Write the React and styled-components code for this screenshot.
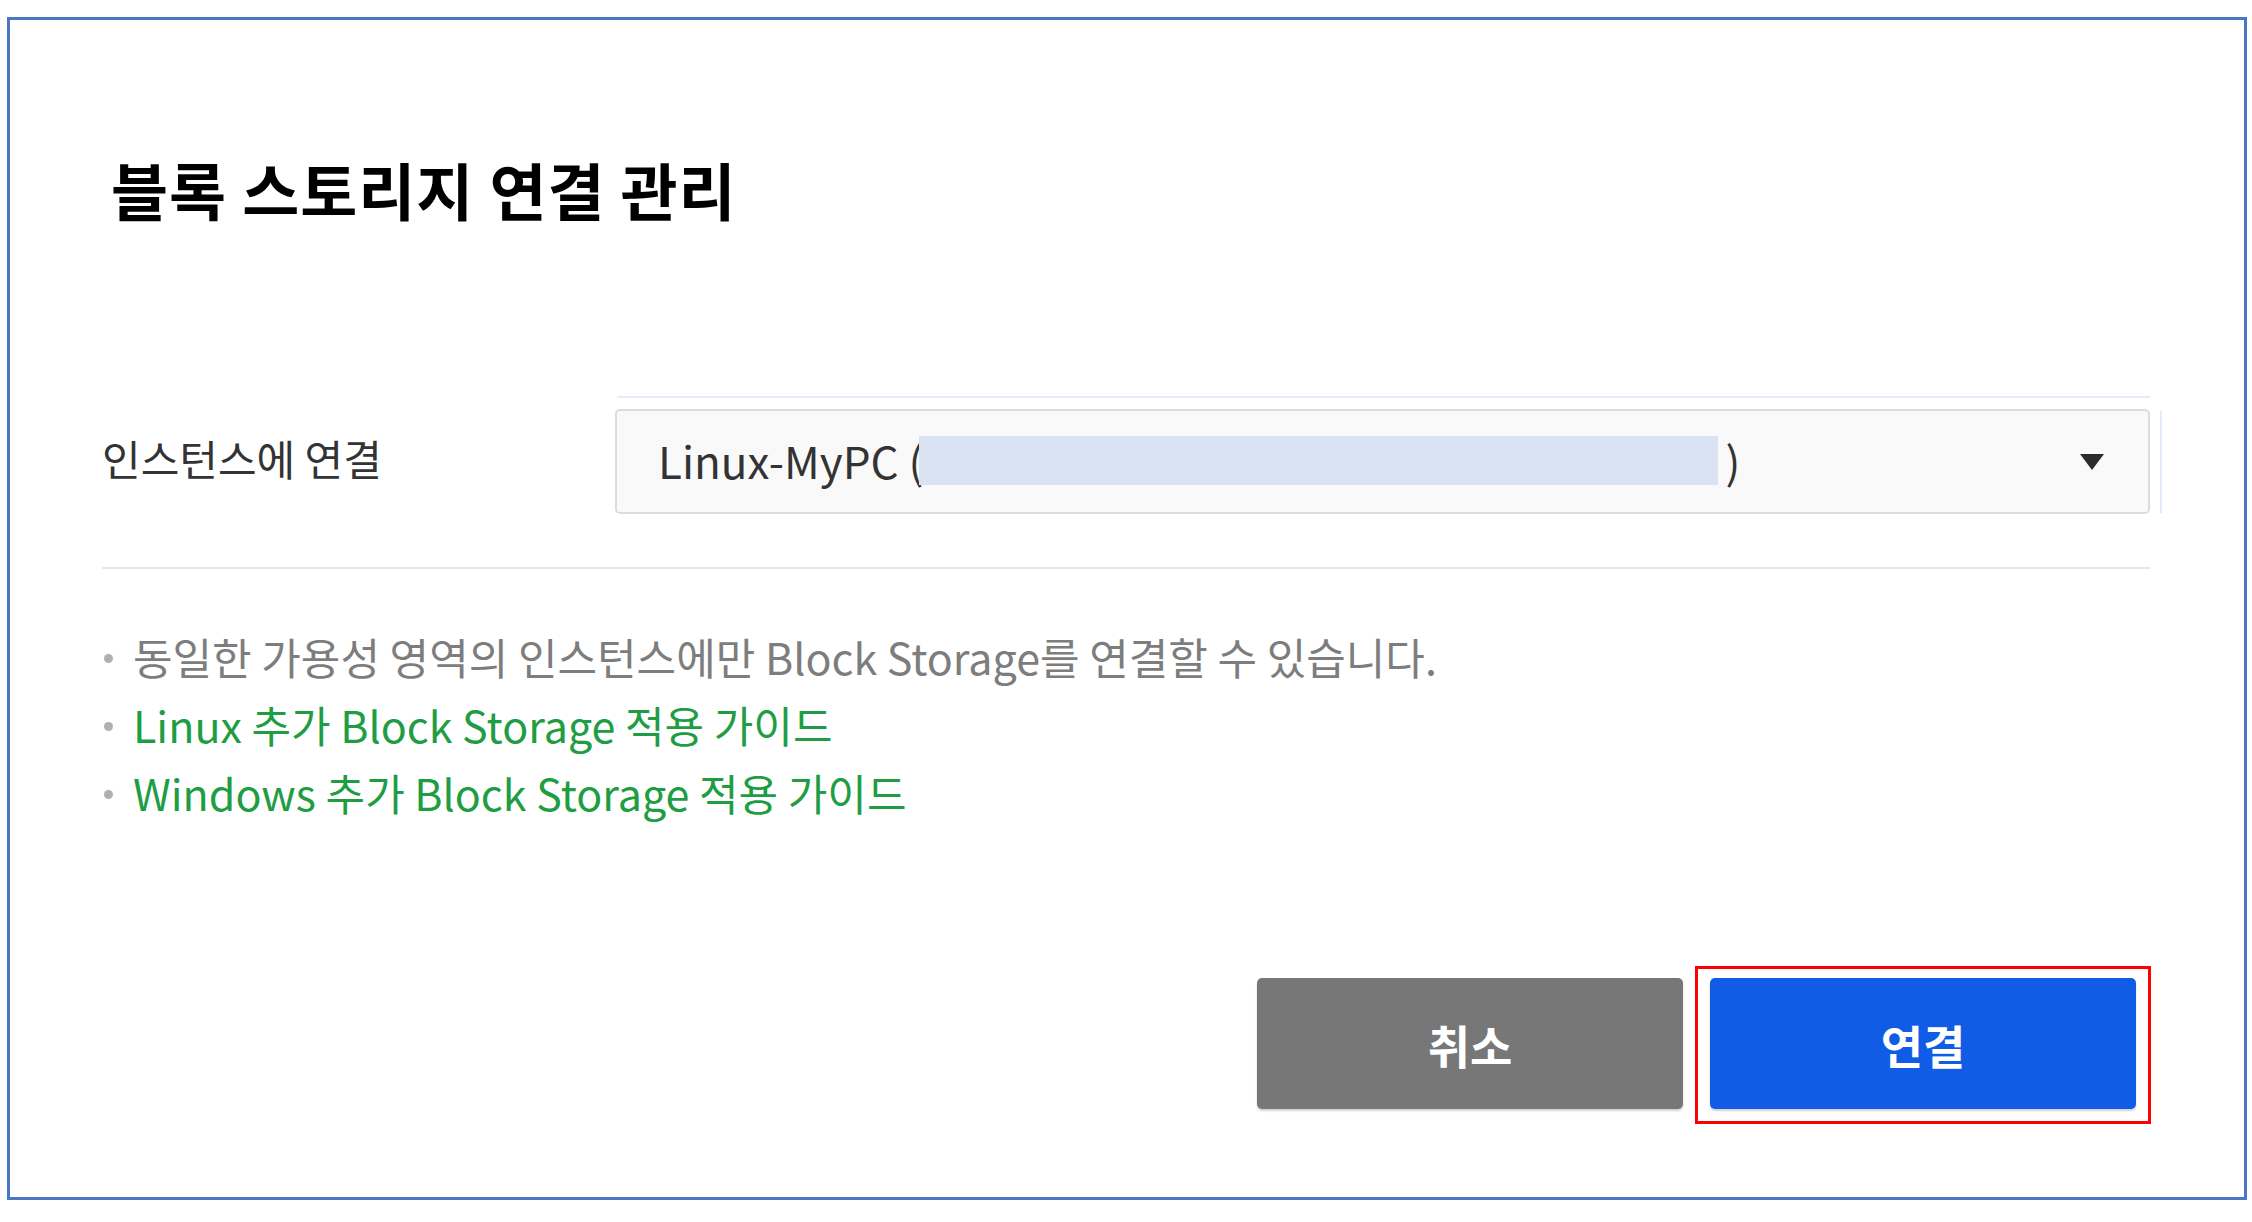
import React from "react";
import styled, { createGlobalStyle } from "styled-components";

const GlobalStyle = createGlobalStyle`
  html, body {
    margin: 0;
    padding: 0;
    background: #ffffff;
  }

  body {
    font-family: "Noto Sans CJK KR", "Noto Sans", sans-serif;
  }
`;

const Frame = styled.div`
  box-sizing: border-box;
  width: 2240px;
  height: 1183px;
  margin: 17px 0 0 7px;
  border: 3px solid #4a76c6;
  background: #ffffff;
  padding: 132px 94px 0 92px;
  display: flex;
  flex-direction: column;
`;

const Title = styled.h2`
  margin: 0 0 183px 9px;
  font-size: 62px;
  line-height: 74px;
  font-weight: 700;
  color: #000000;
  letter-spacing: 1px;
`;

const FieldRow = styled.div`
  display: flex;
  align-items: center;
  height: 105px;
`;

const FieldLabel = styled.div`
  width: 513px;
  flex-shrink: 0;
  padding-bottom: 8px;
  font-size: 42px;
  color: #333333;
`;

const SelectWrap = styled.div`
  position: relative;
  flex: 1;
  height: 100%;

  &::before {
    content: "";
    position: absolute;
    left: 2px;
    right: 0;
    top: -13px;
    height: 2px;
    background: #e4ecf9;
  }

  &::after {
    content: "";
    position: absolute;
    right: -12px;
    top: 2px;
    bottom: 1px;
    width: 2px;
    background: #e4ecf9;
  }
`;

const SelectBox = styled.div`
  box-sizing: border-box;
  height: 100%;
  display: flex;
  align-items: center;
  justify-content: space-between;
  padding: 0 44px 4px 41px;
  background: #f9f9f9;
  border: 2px solid #dcdcdc;
  border-radius: 5px;
  font-size: 44px;
  color: #333333;
`;

const SelectValue = styled.span`
  display: flex;
  align-items: center;
  white-space: nowrap;
`;

const Masked = styled.span`
  display: inline-block;
  width: 799px;
  height: 49px;
  margin: 2px 7px 0 -4px;
  background: #dae3f3;
`;

const Caret = styled.span`
  width: 0;
  height: 0;
  margin-top: 4px;
  border-left: 12px solid transparent;
  border-right: 12px solid transparent;
  border-top: 16px solid #2b2b2b;
`;

const Divider = styled.hr`
  margin: 53px 0 0;
  border: 0;
  height: 2px;
  background: #e6e6e6;
`;

const Notes = styled.ul`
  margin: 53px 0 0;
  padding: 0;
  list-style: none;
`;

const Note = styled.li`
  display: flex;
  align-items: center;
  height: 68px;
  font-size: 43px;
  color: ${(p) => (p.$link ? "#1f9d43" : "#7d7d7d")};
  white-space: nowrap;

  &::before {
    content: "";
    width: 9px;
    height: 9px;
    border-radius: 50%;
    background: #b0b0b0;
    margin: 4px 20px 0 2px;
    flex-shrink: 0;
  }
`;

const ButtonRow = styled.div`
  display: flex;
  justify-content: flex-end;
  gap: 27px;
  margin: 152px 14px 0 0;
`;

const Button = styled.button`
  position: relative;
  width: 426px;
  height: 131px;
  border: 0;
  border-radius: 5px;
  font-family: "Noto Sans CJK KR", sans-serif;
  font-size: 46px;
  font-weight: 700;
  color: #ffffff;
  background: ${(p) => (p.$primary ? "#105ce6" : "#777777")};
  box-shadow: 0 2px 2px rgba(0, 0, 0, 0.18);
  cursor: pointer;

  ${(p) =>
    p.$marked &&
    `
    &::after {
      content: "";
      position: absolute;
      top: -12px;
      left: -15px;
      right: -15px;
      bottom: -15px;
      border: 3px solid #ff0000;
      pointer-events: none;
    }
  `}
`;

export default function App() {
  return (
    <>
      <GlobalStyle />
      <Frame>
        <Title>블록 스토리지 연결 관리</Title>

        <FieldRow>
          <FieldLabel>인스턴스에 연결</FieldLabel>
          <SelectWrap>
            <SelectBox>
              <SelectValue>
                Linux-MyPC (<Masked />)
              </SelectValue>
              <Caret />
            </SelectBox>
          </SelectWrap>
        </FieldRow>

        <Divider />

        <Notes>
          <Note>
            동일한 가용성 영역의 인스턴스에만 Block Storage를 연결할 수 있습니다.
          </Note>
          <Note $link>Linux 추가 Block Storage 적용 가이드</Note>
          <Note $link>Windows 추가 Block Storage 적용 가이드</Note>
        </Notes>

        <ButtonRow>
          <Button>취소</Button>
          <Button $primary $marked>
            연결
          </Button>
        </ButtonRow>
      </Frame>
    </>
  );
}
